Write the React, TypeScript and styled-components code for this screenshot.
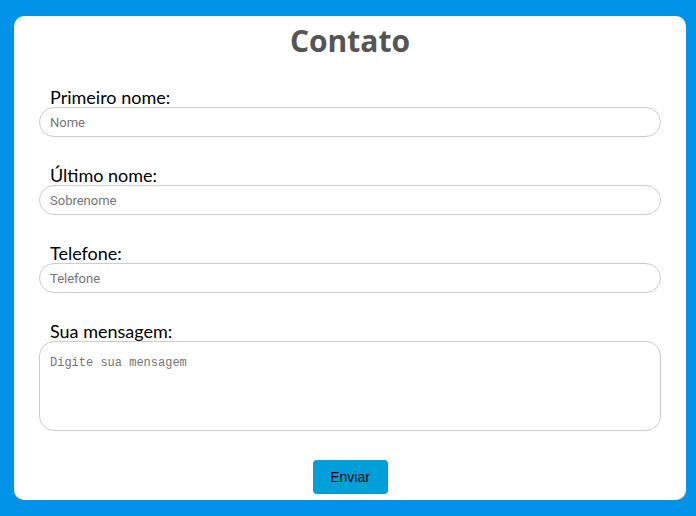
import React from "react";
import styled, { createGlobalStyle } from "styled-components";

const Global = createGlobalStyle`
  html, body { margin: 0; padding: 0; background: #0093e9; }
  * { box-sizing: border-box; }
`;

const Page = styled.div`
  width: 696px;
  height: 516px;
  padding: 16px 10px 16px 14px;
  background: #0093e9;
`;

const Card = styled.form`
  height: 484px;
  background: #ffffff;
  border-radius: 10px;
  padding: 0 25px;
  display: flex;
  flex-direction: column;
`;

const Title = styled.h1`
  margin: 3px 0 0;
  text-align: center;
  font-family: "Open Sans", sans-serif;
  font-weight: 700;
  font-size: 30px;
  line-height: 44px;
  color: #555555;
`;

const Group = styled.div`
  display: flex;
  flex-direction: column;
  margin-top: ${(p: { $first?: boolean }) => (p.$first ? "24px" : "28px")};
`;

const Label = styled.label`
  padding-left: 11px;
  font-family: Lato, "Open Sans", sans-serif;
  font-size: 18px;
  line-height: 20px;
  color: #000000;
`;

const Input = styled.input`
  width: 100%;
  height: 30px;
  border: 1px solid #cccccc;
  border-radius: 15px;
  padding: 0 10px;
  font-family: Roboto, Arial, sans-serif;
  font-size: 13px;
  color: #333;
  outline: none;
  &::placeholder { color: #757575; }
`;

const TextArea = styled.textarea`
  width: 100%;
  height: 90px;
  border: 1px solid #cccccc;
  border-radius: 15px;
  padding: 13px 10px 10px;
  font-family: "Liberation Mono", "DejaVu Sans Mono", monospace;
  font-size: 12px;
  line-height: 16px;
  resize: none;
  outline: none;
  &::placeholder { color: #757575; }
`;

const Footer = styled.div`
  display: flex;
  justify-content: center;
  margin-top: 29px;
`;

const Button = styled.button`
  width: 75px;
  height: 34px;
  border: none;
  border-radius: 4px;
  background: #009fd9;
  color: #000000;
  font-family: Arial, "Liberation Sans", sans-serif;
  font-size: 14px;
  cursor: pointer;
`;

export default function App() {
  return (
    <>
      <Global />
      <Page>
        <Card onSubmit={(e) => e.preventDefault()}>
          <Title>Contato</Title>
          <Group $first>
            <Label htmlFor="nome">Primeiro nome:</Label>
            <Input id="nome" placeholder="Nome" />
          </Group>
          <Group>
            <Label htmlFor="sobrenome">Último nome:</Label>
            <Input id="sobrenome" placeholder="Sobrenome" />
          </Group>
          <Group>
            <Label htmlFor="telefone">Telefone:</Label>
            <Input id="telefone" placeholder="Telefone" />
          </Group>
          <Group>
            <Label htmlFor="mensagem">Sua mensagem:</Label>
            <TextArea id="mensagem" placeholder="Digite sua mensagem" />
          </Group>
          <Footer>
            <Button type="submit">Enviar</Button>
          </Footer>
        </Card>
      </Page>
    </>
  );
}
